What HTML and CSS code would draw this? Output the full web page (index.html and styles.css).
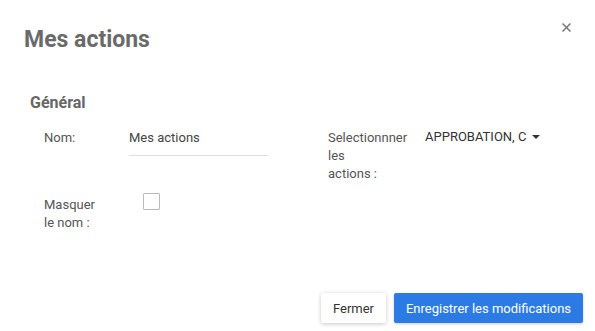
FILE: index.html
```html
<!DOCTYPE html>
<html lang="fr">
<head>
<meta charset="utf-8">
<link rel="stylesheet" href="styles.css">
</head>
<body>
<div class="modal">
  <div class="header">
    <h1 class="title">Mes actions</h1>
    <button class="close" aria-label="Fermer">
      <svg width="9" height="9" viewBox="0 0 9 9"><path d="M0.5 0.5 L8.5 8.5 M8.5 0.5 L0.5 8.5" stroke="#777" stroke-width="1.5" fill="none"/></svg>
    </button>
  </div>
  <div class="body">
    <h2 class="section">Général</h2>
    <div class="grid">
      <div class="col">
        <div class="row">
          <div class="label">Nom:</div>
          <div class="value"><div class="input">Mes actions</div></div>
        </div>
        <div class="row row-check">
          <div class="label">Masquer<br>le nom :</div>
          <div class="value"><span class="checkbox"></span></div>
        </div>
      </div>
      <div class="col col-right">
        <div class="row">
          <div class="label label-right">Selectionnner<br>les<br>actions :</div>
          <div class="value"><div class="select">APPROBATION, C<span class="caret"></span></div></div>
        </div>
      </div>
    </div>
  </div>
  <div class="footer">
    <button class="btn btn-default">Fermer</button>
    <button class="btn btn-primary">Enregistrer les modifications</button>
  </div>
</div>
</body>
</html>
```
FILE: styles.css
```css
* { box-sizing: border-box; }
html, body { margin: 0; padding: 0; background: #fff; }
body { font-family: Roboto, "Liberation Sans", sans-serif; color: #555; }
.modal { width: 595px; height: 331px; display: flex; flex-direction: column; }
.header { display: flex; justify-content: space-between; align-items: flex-start; padding: 26px 23px 0 24px; }
.title { margin: 0; font-size: 23px; font-weight: 700; color: #6a6a6a; line-height: 28px; }
.close { border: 0; background: none; padding: 0; margin-top: -5px; width: 12px; height: 12px; display: flex; align-items: center; justify-content: center; cursor: pointer; }
.body { padding: 0 0 0 30px; flex: 1; }
.section { margin: 39px 0 0; font-size: 16px; font-weight: 700; color: #666; line-height: 20px; }
.grid { display: grid; grid-template-columns: 298px 1fr; margin-top: 16px; }
.col { display: flex; flex-direction: column; }
.row { display: flex; align-items: flex-start; font-size: 13px; line-height: 18px; }
.label { width: 99px; padding-left: 14px; color: #555; flex: none; }
.label-right { width: 97px; padding-left: 0; }
.row-check { margin-top: 40px; }
.input { width: 139px; color: #444; padding-bottom: 8px; border-bottom: 1px solid #ddd; }
.checkbox { display: block; width: 17px; height: 17px; border: 1px solid #bbb; border-radius: 1px; margin: -3px 0 0 14px; background: #fff; }
.select { color: #333; display: flex; align-items: center; margin-top: -1px; }
.caret { width: 0; height: 0; border-left: 4px solid transparent; border-right: 4px solid transparent; border-top: 4px solid #333; margin-left: 6px; }
.footer { display: flex; justify-content: flex-end; gap: 8px; padding: 0 12px 8px 0; }
.btn { font-family: Roboto, "Liberation Sans", sans-serif; font-size: 13px; height: 30px; border: 0; border-radius: 2px; padding: 0; white-space: nowrap; cursor: pointer; }
.btn-default { background: #fff; color: #333; box-shadow: 0 1px 4px rgba(0,0,0,0.22); width: 65px; }
.btn-primary { background: #2c7be5; color: #fff; box-shadow: 0 1px 3px rgba(0,0,0,0.2); width: 189px; }
```
